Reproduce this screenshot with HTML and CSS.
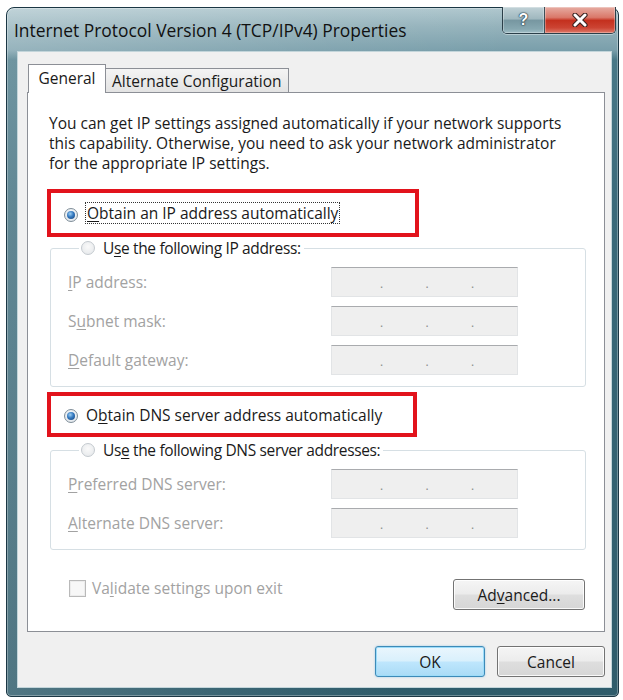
FILE: index.html
```html
<!DOCTYPE html>
<html lang="en">
<head>
<meta charset="utf-8">
<title>Internet Protocol Version 4 (TCP/IPv4) Properties</title>
<link rel="stylesheet" href="styles.css">
</head>
<body>
<div class="window">
  <div class="titlebar">
    <span class="title">Internet Protocol Version 4 (TCP/IPv4) Properties</span>
    <div class="caption-buttons">
      <div class="cap-btn help"><span>?</span></div>
      <div class="cap-btn close">
        <svg width="16" height="14" viewBox="0 0 16 14">
          <path d="M3 2 L13 12 M13 2 L3 12" stroke="#3b2320" stroke-width="5.2" stroke-linecap="round"/>
          <path d="M3 2 L13 12 M13 2 L3 12" stroke="#ffffff" stroke-width="3" stroke-linecap="round"/>
        </svg>
      </div>
    </div>
  </div>

  <div class="client">
    <div class="tabs">
      <div class="tab active">General</div>
      <div class="tab">Alternate Configuration</div>
    </div>

    <div class="panel">
      <p class="intro">You can get IP settings assigned automatically if your network supports<br>this capability. Otherwise, you need to ask your network administrator<br>for the appropriate IP settings.</p>

      <div class="callout first">
        <span class="radio on"></span>
        <span class="focus"><u>O</u>btain an IP address automatically</span>
      </div>

      <fieldset class="group">
        <legend><span class="radio off"></span><span>U<u>s</u>e the following IP address:</span></legend>
        <div class="row"><span class="label"><u>I</u>P address:</span><div class="ip"><span>.</span><span>.</span><span>.</span></div></div>
        <div class="row"><span class="label">S<u>u</u>bnet mask:</span><div class="ip"><span>.</span><span>.</span><span>.</span></div></div>
        <div class="row"><span class="label"><u>D</u>efault gateway:</span><div class="ip"><span>.</span><span>.</span><span>.</span></div></div>
      </fieldset>

      <div class="callout second">
        <span class="radio on"></span>
        <span class="plain">O<u>b</u>tain DNS server address automatically</span>
      </div>

      <fieldset class="group">
        <legend><span class="radio off"></span><span>Us<u>e</u> the following DNS server addresses:</span></legend>
        <div class="row"><span class="label"><u>P</u>referred DNS server:</span><div class="ip"><span>.</span><span>.</span><span>.</span></div></div>
        <div class="row"><span class="label"><u>A</u>lternate DNS server:</span><div class="ip"><span>.</span><span>.</span><span>.</span></div></div>
      </fieldset>

      <div class="panel-footer">
        <div class="check-row">
          <span class="checkbox"></span>
          <span class="label">Va<u>l</u>idate settings upon exit</span>
        </div>
        <button class="btn advanced">Ad<u>v</u>anced...</button>
      </div>
    </div>

    <div class="dialog-buttons">
      <button class="btn default">OK</button>
      <button class="btn cancel">Cancel</button>
    </div>
  </div>
</div>
</body>
</html>
```
FILE: styles.css
```css
* { box-sizing: border-box; }

html, body {
  margin: 0;
  background: #ffffff;
}

body {
  font-family: "Open Sans", "Noto Sans", sans-serif;
  font-size: 15.5px;
  line-height: 20px;
  color: #1a1a1a;
}

u { text-decoration-thickness: 1px; text-underline-offset: 2px; }

/* ---------- window frame ---------- */
.window {
  margin: 7px 0 0 6px;
  width: 613px;
  height: 690px;
  border: 1px solid #1b3744;
  border-radius: 8px 8px 5px 5px;
  padding: 0 6px 8px 10px;
  display: flex;
  flex-direction: column;
  background:
    linear-gradient(100deg, rgba(255,255,255,0.22) 0%, rgba(255,255,255,0.06) 45%, rgba(255,255,255,0) 70%),
    linear-gradient(to bottom, #afc7ce 0px, #95b3bc 18px, #7a9fab 42px, #487887 52px, #3a6a7a 200px, #2f5c6b 100%);
  box-shadow: inset 0 0 0 1px rgba(255,255,255,0.3);
}

.titlebar {
  height: 43px;
  margin: 0 -6px 0 -10px;
  padding: 0 2px 0 7px;
  display: flex;
  justify-content: space-between;
  align-items: flex-start;
}

.title {
  margin-top: 10px;
  font-size: 17.4px;
  line-height: 24px;
  color: #111111;
  white-space: nowrap;
}

.caption-buttons {
  margin-top: -1px;
  display: flex;
  height: 27px;
  border: 1px solid #2b3f49;
  border-top: none;
  border-radius: 0 0 5px 5px;
  overflow: hidden;
  box-shadow: 0 1px 0 rgba(255,255,255,0.4);
}

.cap-btn {
  display: flex;
  align-items: center;
  justify-content: center;
  height: 100%;
  box-shadow: inset 0 0 0 1px rgba(255,255,255,0.3);
}

.cap-btn.help {
  width: 42px;
  border-right: 1px solid #3d4f58;
  background: linear-gradient(to bottom, #c0d1d6 0%, #a0b8bf 45%, #7797a1 52%, #87a8b1 85%, #a2bfc7 100%);
}

.cap-btn.help span {
  font-family: "Liberation Sans", sans-serif;
  font-weight: bold;
  font-size: 16px;
  line-height: 16px;
  color: #ffffff;
  text-shadow: 0 0 2px #1f3440, 0 0 1px #1f3440, 0 0 1px #1f3440;
}

.cap-btn.close {
  width: 70px;
  background: linear-gradient(to bottom, #e6aca2 0%, #da786a 40%, #c4301e 52%, #cc4433 80%, #de7a6a 100%);
}

/* ---------- client area ---------- */
.client {
  flex: 1;
  background: #f0f0f0;
  border: 1px solid #c3d5da;
  padding: 12px 6px 0 9px;
  display: flex;
  flex-direction: column;
}

.tabs {
  display: flex;
  align-items: flex-end;
  height: 28px;
  margin-left: 1px;
}

.tab {
  height: 24px;
  padding: 0 6px;
  border: 1px solid #8c8f96;
  border-bottom: none;
  background: linear-gradient(to bottom, #f4f4f4, #e3e3e3);
  display: flex;
  align-items: center;
  white-space: nowrap;
  margin-left: -1px;
}

.tab:first-child { margin-left: 0; }

.tab.active {
  position: relative;
  z-index: 1;
  height: 29px;
  margin-bottom: -1px;
  width: 78px;
  justify-content: center;
  background: #ffffff;
  padding-bottom: 3px;
}

.panel {
  height: 540px;
  background: #ffffff;
  border: 1px solid #8c8f96;
  padding: 0 18px 21px 21px;
  display: flex;
  flex-direction: column;
}

.intro {
  margin: 20px 0 0;
  line-height: 20px;
  white-space: nowrap;
}

/* red highlight boxes */
.callout {
  margin-left: -2px;
  width: 372px;
  border: 4px solid #e2131c;
  display: flex;
  align-items: center;
  padding-left: 13px;
  gap: 8px;
  white-space: nowrap;
}

.callout.first { margin-top: 16px; height: 48px; }
.callout.second { margin-top: 5px; height: 45px; width: 370px; }

.callout .radio { margin-top: 3px; }

.focus {
  border: 1px dotted #333;
  padding: 0 1px;
  line-height: 20px;
  margin-left: -1px;
}

/* group boxes */
.group {
  margin: 1px 0 0 1px;
  width: 536px;
  border: 1px solid #d6dfe4;
  border-radius: 3px;
  padding: 9px 0 11px 17px;
  display: flex;
  flex-direction: column;
  gap: 9px;
}

.group + .callout { margin-top: 5px; }
.callout.second + .group { margin-top: 3px; }

.group legend {
  margin-left: 11px;
  padding: 0 3px 0 2px;
  display: flex;
  align-items: center;
  gap: 8px;
  line-height: 20px;
  white-space: nowrap;
  letter-spacing: -0.35px;
}

.row {
  display: flex;
  align-items: center;
  height: 30px;
}

.row .label {
  width: 263px;
  color: #a2a2a2;
}

.ip {
  width: 187px;
  height: 30px;
  background: #efefef;
  border: 1px solid #e2e4e6;
  border-top-color: #a9abae;
  display: flex;
  padding: 6px 0 0 48px;
  color: #8c8c8c;
  font-size: 12px;
}

.ip span { width: 45.5px; }

/* radio buttons */
.radio {
  flex: none;
  width: 14px;
  height: 14px;
  border-radius: 50%;
  position: relative;
}

.radio.on {
  border: 1px solid #7f8e99;
  background: radial-gradient(circle at 50% 40%, #ffffff 0%, #d9e0e6 100%);
}

.radio.on::after {
  content: "";
  position: absolute;
  inset: 2px;
  border-radius: 50%;
  background: radial-gradient(circle at 40% 35%, #9fd0f3 0%, #3479c0 45%, #163f74 100%);
}

.radio.off {
  border: 1px solid #c4cacf;
  background: radial-gradient(circle at 50% 40%, #fafafa 0%, #e3e6e9 100%);
}

/* footer of the tab page */
.panel-footer {
  margin-top: auto;
  display: flex;
  justify-content: space-between;
  align-items: flex-start;
  height: 31px;
}

.check-row {
  margin-left: 20px;
  display: flex;
  align-items: center;
  gap: 6px;
  height: 18px;
  white-space: nowrap;
}

.check-row .label { color: #a2a2a2; }

.checkbox {
  width: 17px;
  height: 17px;
  border: 1px solid #b9b9b9;
  background: #f7f7f7;
  box-shadow: inset 0 0 0 1px #ececec;
}

/* push buttons */
.btn {
  font: inherit;
  color: #1a1a1a;
  height: 31px;
  border: 1px solid #737373;
  border-radius: 3px;
  background: linear-gradient(to bottom, #f5f5f5 0%, #ececec 48%, #dedede 52%, #d6d6d6 100%);
  box-shadow: inset 0 0 0 1px rgba(255,255,255,0.85);
  padding: 0;
}

.btn.advanced { width: 132px; margin-right: 1px; }

.dialog-buttons {
  margin-top: 14px;
  display: flex;
  justify-content: flex-end;
  gap: 12px;
}

.btn.default {
  width: 110px;
  border-color: #3d8ab8;
  background: linear-gradient(to bottom, #eaf6fd 0%, #d9f0fc 48%, #bee6fd 52%, #a9dbf6 100%);
  box-shadow: inset 0 0 0 1px #9ddcf9, 0 0 2px rgba(60,160,220,0.5);
}

.btn.cancel { width: 108px; }
```
